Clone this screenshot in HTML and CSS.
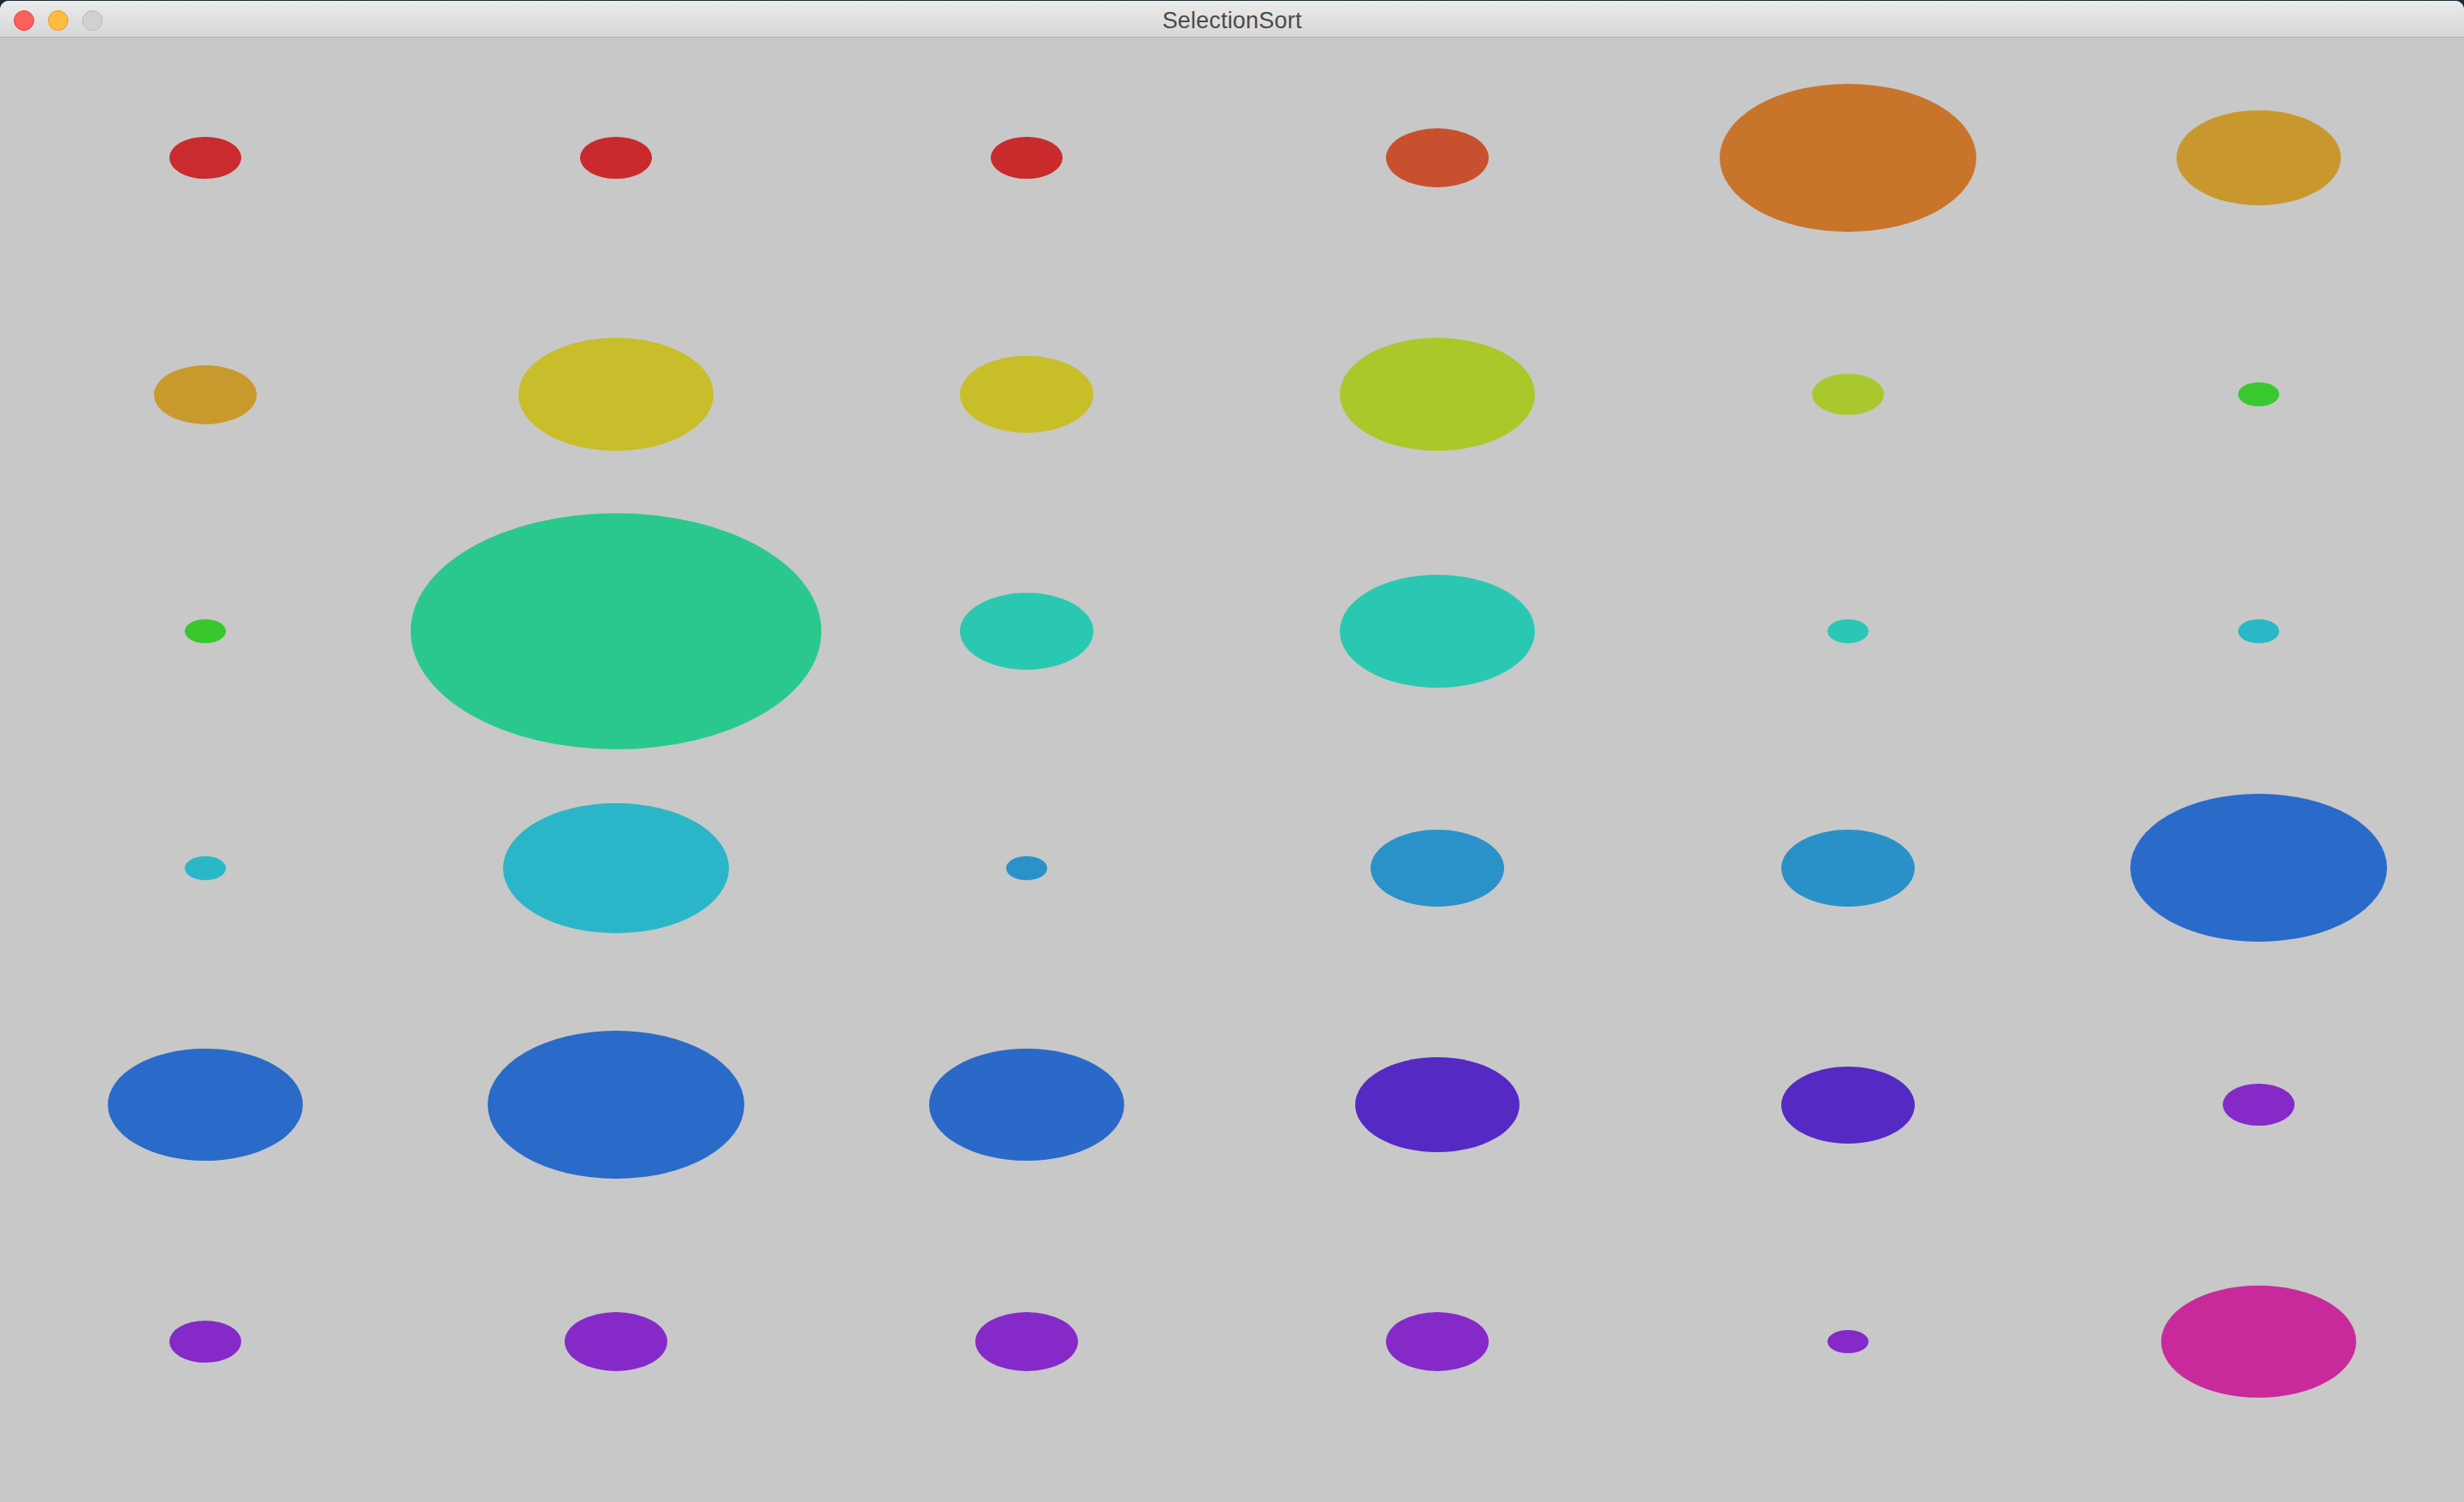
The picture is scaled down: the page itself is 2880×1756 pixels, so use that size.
FILE: index.html
```html
<!DOCTYPE html>
<html>
<head>
<meta charset="utf-8">
<title>SelectionSort</title>
<link rel="stylesheet" href="styles.css">
</head>
<body>
<div class="window">
  <div class="titlebar">
    <div class="lights">
      <span class="light close"></span>
      <span class="light min"></span>
      <span class="light zoom"></span>
    </div>
    <div class="title">SelectionSort</div>
  </div>
  <div class="canvas">
    <div class="cell"><div class="dot" style="--s:0.175;--c:#c92b2e"></div></div>
    <div class="cell"><div class="dot" style="--s:0.175;--c:#c92a2d"></div></div>
    <div class="cell"><div class="dot" style="--s:0.175;--c:#c92a2c"></div></div>
    <div class="cell"><div class="dot" style="--s:0.25;--c:#c9502e"></div></div>
    <div class="cell"><div class="dot" style="--s:0.625;--c:#c8742a"></div></div>
    <div class="cell"><div class="dot" style="--s:0.4;--c:#c8982e"></div></div>

    <div class="cell"><div class="dot" style="--s:0.25;--c:#c89a2e"></div></div>
    <div class="cell"><div class="dot" style="--s:0.475;--c:#c8bd2a"></div></div>
    <div class="cell"><div class="dot" style="--s:0.325;--c:#c8be2a"></div></div>
    <div class="cell"><div class="dot" style="--s:0.475;--c:#aac82a"></div></div>
    <div class="cell"><div class="dot" style="--s:0.175;--c:#a8c82e"></div></div>
    <div class="cell"><div class="dot" style="--s:0.1;--c:#3ac830"></div></div>

    <div class="cell"><div class="dot" style="--s:0.1;--c:#38c82e"></div></div>
    <div class="cell"><div class="dot" style="--s:1;--c:#2ac88c"></div></div>
    <div class="cell"><div class="dot" style="--s:0.325;--c:#2ac8b0"></div></div>
    <div class="cell"><div class="dot" style="--s:0.475;--c:#2ac8b2"></div></div>
    <div class="cell"><div class="dot" style="--s:0.1;--c:#2ac8b4"></div></div>
    <div class="cell"><div class="dot" style="--s:0.1;--c:#2ab8c8"></div></div>

    <div class="cell"><div class="dot" style="--s:0.1;--c:#2ab8c8"></div></div>
    <div class="cell"><div class="dot" style="--s:0.55;--c:#2ab6c8"></div></div>
    <div class="cell"><div class="dot" style="--s:0.1;--c:#2a92c8"></div></div>
    <div class="cell"><div class="dot" style="--s:0.325;--c:#2a92c8"></div></div>
    <div class="cell"><div class="dot" style="--s:0.325;--c:#2a90c8"></div></div>
    <div class="cell"><div class="dot" style="--s:0.625;--c:#2a6ac8"></div></div>

    <div class="cell"><div class="dot" style="--s:0.475;--c:#2a6ac8"></div></div>
    <div class="cell"><div class="dot" style="--s:0.625;--c:#2a6ac8"></div></div>
    <div class="cell"><div class="dot" style="--s:0.475;--c:#2a69c8"></div></div>
    <div class="cell"><div class="dot" style="--s:0.4;--c:#5529c4"></div></div>
    <div class="cell"><div class="dot" style="--s:0.325;--c:#5529c4"></div></div>
    <div class="cell"><div class="dot" style="--s:0.175;--c:#8529c8"></div></div>

    <div class="cell"><div class="dot" style="--s:0.175;--c:#8529c8"></div></div>
    <div class="cell"><div class="dot" style="--s:0.25;--c:#8529c8"></div></div>
    <div class="cell"><div class="dot" style="--s:0.25;--c:#8529c8"></div></div>
    <div class="cell"><div class="dot" style="--s:0.25;--c:#8529c8"></div></div>
    <div class="cell"><div class="dot" style="--s:0.1;--c:#8529c8"></div></div>
    <div class="cell"><div class="dot" style="--s:0.475;--c:#c82a9c"></div></div>
  </div>
</div>
</body>
</html>
```

FILE: styles.css
```css
html, body {
  margin: 0;
  padding: 0;
  background: #1c2b31;
  width: 2880px;
  height: 1756px;
  overflow: hidden;
}

.window {
  margin-top: 1px;
  height: 1755px;
  background: #c8c8c8;
  border-radius: 10px 10px 0 0;
  overflow: hidden;
  display: flex;
  flex-direction: column;
}

.titlebar {
  position: relative;
  height: 42px;
  border-bottom: 1px solid #b1b1b1;
  background: linear-gradient(to bottom, #ececec, #d6d6d6);
  display: flex;
  align-items: center;
  justify-content: center;
  flex: none;
}

.lights {
  position: absolute;
  left: 16px;
  top: 11px;
  display: flex;
  gap: 16px;
}

.light {
  width: 22px;
  height: 22px;
  border-radius: 50%;
  border: 1px solid transparent;
}

.light.close {
  background: #fc605c;
  border-color: #de4a47;
}

.light.min {
  background: #fdbc40;
  border-color: #dea134;
}

.light.zoom {
  background: #d1d1d1;
  border-color: #b9b9b9;
}

.title {
  font-family: "Liberation Sans", Arial, sans-serif;
  font-size: 27px;
  color: #4a4a4a;
  letter-spacing: 0.2px;
  padding-top: 4px;
}

.canvas {
  padding-top: 2px;
  display: grid;
  grid-template-columns: repeat(6, 480px);
  grid-template-rows: repeat(6, 276.8px);
}

.cell {
  display: flex;
  align-items: center;
  justify-content: center;
}

.dot {
  width: calc(var(--s) * 480px);
  height: calc(var(--s) * 276.8px);
  border-radius: 50%;
  background: var(--c);
  flex: none;
}
```
